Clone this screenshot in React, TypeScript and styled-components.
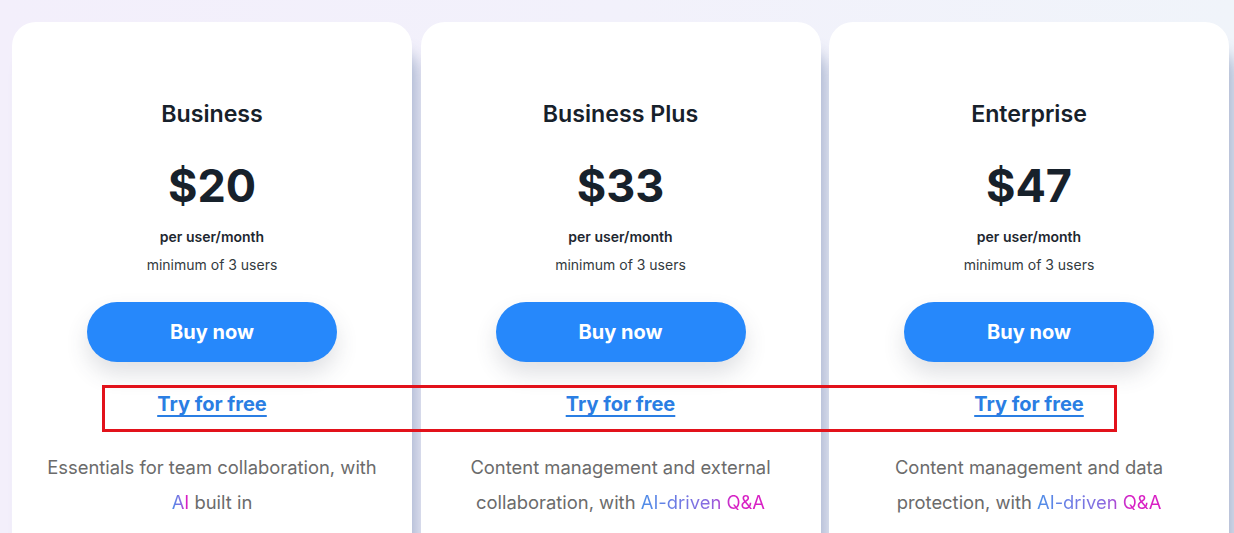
import React from 'react';
import styled, { createGlobalStyle } from 'styled-components';

const GlobalStyle = createGlobalStyle`
  html, body {
    margin: 0;
    padding: 0;
    height: 100%;
    overflow: hidden;
  }
  body {
    font-family: Inter, "Noto Sans", "Liberation Sans", sans-serif;
    background: linear-gradient(90deg, #f3effb 0%, #f2f1fb 50%, #f0f4fa 100%);
  }
`;

type Plan = {
  name: string;
  price: string;
  text: string;
  highlight: string;
  tail?: string;
};

const plans: Plan[] = [
  { name: 'Business', price: '$20', text: 'Essentials for team collaboration, with ', highlight: 'AI', tail: ' built in' },
  { name: 'Business Plus', price: '$33', text: 'Content management and external collaboration, with ', highlight: 'AI-driven Q&A' },
  { name: 'Enterprise', price: '$47', text: 'Content management and data protection, with ', highlight: 'AI-driven Q&A' },
];

const Page = styled.div`
  position: relative;
  height: 533px;
  padding: 22px 6px 0 12px;
  box-sizing: border-box;
  display: grid;
  grid-template-columns: repeat(3, 400px);
  column-gap: 8.5px;
  overflow: hidden;
`;

const Card = styled.div`
  background: #fff;
  border-radius: 24px 24px 0 0;
  height: 560px;
  padding-top: 77px;
  box-sizing: border-box;
  display: flex;
  flex-direction: column;
  align-items: center;
  text-align: center;
  box-shadow: 10px 26px 16px -4px rgba(160, 173, 202, 0.85);
`;

const Title = styled.h2`
  margin: 0;
  font-size: 23.2px;
  line-height: 30px;
  font-weight: 600;
  color: #17212b;
`;

const Price = styled.div`
  margin-top: 30px;
  font-size: 45px;
  line-height: 54px;
  font-weight: 700;
  color: #17212b;
`;

const Per = styled.div`
  margin-top: 14px;
  font-size: 14px;
  line-height: 20px;
  font-weight: 600;
  color: #1e2730;
`;

const Minimum = styled.div`
  margin-top: 8px;
  font-size: 14px;
  line-height: 20px;
  color: #333a40;
`;

const BuyButton = styled.button`
  margin-top: 27px;
  width: 250px;
  height: 60px;
  border: none;
  border-radius: 30px;
  background: #2688fb;
  color: #fff;
  font-family: inherit;
  font-size: 20px;
  font-weight: 700;
  box-shadow: 0 12px 22px rgba(60, 70, 90, 0.16);
  cursor: pointer;
`;

const TryLink = styled.a`
  margin-top: 29px;
  font-size: 20px;
  line-height: 26px;
  font-weight: 700;
  color: #2a7ee3;
  text-decoration: underline;
  text-decoration-thickness: 2px;
  text-underline-offset: 4px;
`;

const Description = styled.p`
  margin: 33px 0 0;
  padding: 0 30px;
  font-size: 18.4px;
  line-height: 35px;
  color: #6b6b6b;
`;

const Gradient = styled.span`
  background: linear-gradient(90deg, #4e8ee8 0%, #8a6ae0 55%, #d81fc4 75%, #d81fc4 100%);
  -webkit-background-clip: text;
  background-clip: text;
  color: transparent;
`;

const Annotation = styled.div`
  position: absolute;
  left: 102px;
  top: 385px;
  width: 1015px;
  height: 47px;
  box-sizing: border-box;
  border: 3px solid #e2121b;
  pointer-events: none;
`;

export default function App() {
  return (
    <>
      <GlobalStyle />
      <Page>
        {plans.map((p) => (
          <Card key={p.name}>
            <Title>{p.name}</Title>
            <Price>{p.price}</Price>
            <Per>per user/month</Per>
            <Minimum>minimum of 3 users</Minimum>
            <BuyButton>Buy now</BuyButton>
            <TryLink href="#">Try for free</TryLink>
            <Description>
              {p.text}
              <Gradient>{p.highlight}</Gradient>
              {p.tail}
            </Description>
          </Card>
        ))}
        <Annotation />
      </Page>
    </>
  );
}
